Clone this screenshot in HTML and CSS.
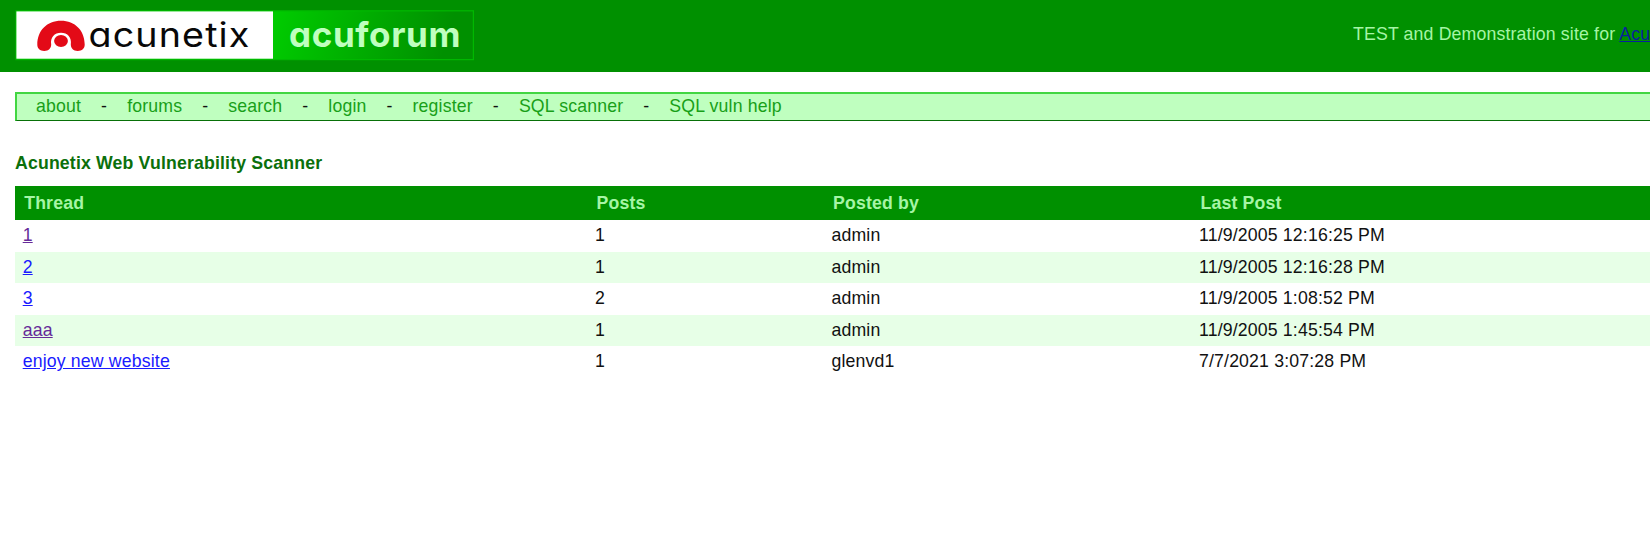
FILE: index.html
```html
<!DOCTYPE html>
<html lang="en">
<head>
<meta charset="utf-8">
<title>acuforum</title>
<link rel="stylesheet" href="styles.css">
</head>
<body>
<header class="masthead">
  <svg class="logo" width="459" height="51" viewBox="15 9.5 459 51" role="img" aria-label="acunetix acuforum">
    <defs>
      <linearGradient id="fade" gradientUnits="userSpaceOnUse" x1="275" y1="20" x2="440" y2="66">
        <stop offset="0" stop-color="#00cb00"/>
        <stop offset="1" stop-color="#009000"/>
      </linearGradient>
    </defs>
    <rect x="16" y="10.3" width="457.4" height="48.8" fill="url(#fade)" stroke="#00b800" stroke-width="1.2"/>
    <rect x="16.4" y="10.9" width="256.6" height="47.3" fill="#fff"/>
    <path d="M37.300 44C37.300 30 47 20.200 61 20.200S84.700 30 84.700 44C84.700 48 82 50.400 77.700 50.400S71 48 70.800 44C72 37 67.500 32.300 61 32.300S50 37 51.200 44C51 48 48.600 50.400 44.300 50.400S37.300 48 37.300 44Z" fill="#e30a17"/>
    <ellipse cx="61" cy="40.500" rx="6.900" ry="5.900" fill="#e30a17"/>
    <text class="brand" x="88.500" y="46.200" textLength="162" lengthAdjust="spacingAndGlyphs">acunetix</text>
    <text class="product" x="289" y="46.300" textLength="172" lengthAdjust="spacingAndGlyphs">acuforum</text>
  </svg>
  <p class="tagline">TEST and Demonstration site for <a href="#">Acunetix Web Vulnerability Scanner</a></p>
</header>
<nav class="menu">
  <a href="#">about</a><span>-</span><a href="#">forums</a><span>-</span><a href="#">search</a><span>-</span><a href="#">login</a><span>-</span><a href="#">register</a><span>-</span><a href="#">SQL scanner</a><span>-</span><a href="#">SQL vuln help</a>
</nav>
<main class="content">
  <h1 class="title">Acunetix Web Vulnerability Scanner</h1>
  <div class="threads">
    <div class="row head"><div>Thread</div><div>Posts</div><div>Posted by</div><div>Last Post</div></div>
    <div class="row"><div><a class="seen" href="#">1</a></div><div>1</div><div>admin</div><div>11/9/2005 12:16:25 PM</div></div>
    <div class="row alt"><div><a href="#">2</a></div><div>1</div><div>admin</div><div>11/9/2005 12:16:28 PM</div></div>
    <div class="row"><div><a href="#">3</a></div><div>2</div><div>admin</div><div>11/9/2005 1:08:52 PM</div></div>
    <div class="row alt"><div><a class="seen" href="#">aaa</a></div><div>1</div><div>admin</div><div>11/9/2005 1:45:54 PM</div></div>
    <div class="row"><div><a href="#">enjoy new website</a></div><div>1</div><div>glenvd1</div><div>7/7/2021 3:07:28 PM</div></div>
  </div>
</main>
</body>
</html>
```

FILE: styles.css
```css
body {
  margin: 0;
  overflow: hidden;
  background: #fff;
  color: #111;
  font: 17.7px/21px "Liberation Sans", Arial, sans-serif;
  letter-spacing: 0.16px;
}

.masthead {
  box-sizing: border-box;
  display: flex;
  justify-content: space-between;
  height: 72px;
  padding: 9.5px 0 0 15px;
  overflow: hidden;
  background: #009000;
}

.logo {
  flex: none;
  letter-spacing: 0;
}

.brand,
.product {
  font-family: Inter, sans-serif;
  font-size: 33.5px;
  font-feature-settings: "cv11";
}

.brand {
  fill: #080808;
  letter-spacing: 1px;
}

.product {
  fill: #bfffbf;
  font-size: 35px;
  font-weight: 700;
  letter-spacing: 0.6px;
}

.tagline {
  flex: none;
  width: 297px;
  margin: 14px 0 0;
  color: #a6f5a6;
  white-space: nowrap;
}

.tagline a {
  color: #0a1f9e;
}

.menu {
  box-sizing: border-box;
  display: flex;
  align-items: center;
  height: 29px;
  margin: 20px 0 0 15px;
  padding: 0 0 2px 19px;
  border: solid #42d642;
  border-width: 2px 0 1px 2px;
  border-bottom-color: #087008;
  background: #bfffbf;
}

.menu a {
  color: #18a018;
  text-decoration: none;
}

.menu span {
  margin: 0 20px;
}

.content {
  padding: 32px 0 0 15px;
}

.title {
  margin: 0 0 12px;
  color: #0b700b;
  font-size: 17.7px;
  line-height: 21px;
}

.row {
  display: grid;
  grid-template-columns: 572.3px 236.5px 367.5px 1fr;
  align-items: center;
  height: 31.5px;
  padding-left: 7.7px;
}

.row a {
  color: #1a1aff;
}

.row .seen {
  color: #662b99;
}

.alt {
  background: #e7ffe7;
}

.head {
  height: 34px;
  padding-left: 9.2px;
  background: #009000;
  color: #a6f5a6;
  font-weight: 700;
}
```
